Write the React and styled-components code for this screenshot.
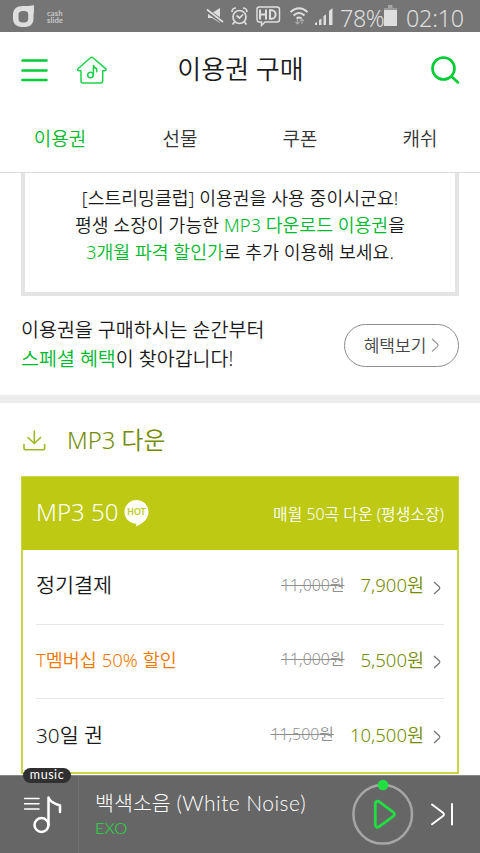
import React from "react";
import styled, { createGlobalStyle } from "styled-components";

const GlobalStyle = createGlobalStyle`
  * { box-sizing: border-box; }
  body {
    margin: 0;
    background: #fff;
    font-family: "Noto Sans", "Noto Sans CJK KR", sans-serif;
    font-weight: 350;
    color: #1a1a1a;
  }
`;

const Screen = styled.div`
  display: flex;
  flex-direction: column;
  width: 480px;
  height: 853px;
  overflow: hidden;
`;

const StatusBar = styled.header`
  display: flex;
  align-items: center;
  height: 32px;
  flex: none;
  padding: 0 0 0 12px;
  background: #757575;
  color: #dedede;
`;

const CashSlide = styled.div`
  flex: none;
  width: 158px;
  margin: 1px 0 0 11px;
  font: 700 7.6px/7px Lato, sans-serif;
  letter-spacing: 0.1px;
  color: #c9c9c9;
`;

const StatusIcons = styled.svg`
  display: block;
  flex: none;
`;

const StatusText = styled.span`
  flex: none;
  width: ${(p) => p.$width}px;
  margin-left: ${(p) => p.$gap}px;
  padding-top: 3px;
  font-size: 23.3px;
  font-weight: 350;
  line-height: 28px;
  white-space: nowrap;
  letter-spacing: ${(p) => p.$spacing}px;
`;

const TitleBar = styled.div`
  display: flex;
  align-items: center;
  flex: none;
  height: 75px;
  padding: 0 20px 0 21px;
`;

const PageTitle = styled.h1`
  flex: 1;
  margin: 0;
  padding: 0 56px 2px 0;
  text-align: center;
  font-size: 26px;
  font-weight: 350;
  line-height: 36px;
`;

const IconButton = styled.button`
  display: flex;
  padding: 0;
  margin: 0 ${(p) => p.$right || 0}px 0 0;
  border: 0;
  background: none;
`;

const Tabs = styled.nav`
  display: grid;
  grid-template-columns: repeat(4, 120px);
  flex: none;
  height: 66px;
  border-bottom: 1px solid #dcdcdc;
`;

const Tab = styled.a`
  padding-top: 17px;
  text-align: center;
  font-size: 19px;
  line-height: 30px;
  color: ${(p) => (p.$active ? "#00b92c" : "#333")};
`;

const Content = styled.main`
  flex: 1;
  min-height: 0;
  overflow: hidden;
`;

const Notice = styled.p`
  height: 123px;
  margin: 0 21px 0 21px;
  padding: 11px 0 0;
  border: 4px solid #e4e4e4;
  border-top: 0;
  text-align: center;
  font-size: 18.3px;
  line-height: 27px;
  white-space: nowrap;
`;

const Accent = styled.span`
  color: #00b92c;
`;

const Benefit = styled.section`
  display: flex;
  justify-content: space-between;
  height: 107px;
  padding: 19px 21px 0 21px;
  border-bottom: 8px solid #ececec;
  font-size: 19.5px;
  line-height: 29px;
`;

const BenefitButton = styled.button`
  display: flex;
  align-items: center;
  justify-content: center;
  gap: 5px;
  width: 115px;
  height: 43px;
  margin-top: 9px;
  padding: 0;
  border: 1px solid #8c8c8c;
  border-radius: 22px;
  background: #fff;
  font: 350 17px/24px "Noto Sans", "Noto Sans CJK KR", sans-serif;
  color: #444;
`;

const SectionTitle = styled.h2`
  display: flex;
  align-items: center;
  gap: 21px;
  height: 73px;
  margin: 0;
  padding: 0 23px 3px;
  font-size: 23.8px;
  font-weight: 350;
  color: #748c00;
`;

const SectionIcon = styled.svg`
  display: block;
  margin-top: 4px;
`;

const PlanCard = styled.section`
  height: 298px;
  margin: 0 21px 0 21px;
  border: 2px solid #cbd545;
  border-top-width: 1px;
`;

const PlanHeader = styled.div`
  display: flex;
  align-items: center;
  height: 73px;
  margin: 0 -1px;
  padding: 0 14px;
  background: #bdc913;
  color: #fff;
`;

const PlanName = styled.span`
  margin: -4px 6px 0 0;
  font-size: 24px;
  line-height: 34px;
`;

const HotBadge = styled.svg`
  display: block;
  margin-top: -2px;
`;

const PlanSummary = styled.span`
  margin: -1px 0 0 auto;
  font-size: 15.9px;
`;

const Option = styled.div`
  display: flex;
  align-items: center;
  height: ${(p) => (p.$last ? 73 : 74.5)}px;
  margin: 0 13px;
  padding-bottom: ${(p) => (p.$last ? 4 : 5)}px;
  border-bottom: ${(p) => (p.$last ? 0 : 1)}px solid #e6e6e6;
`;

const OptionName = styled.span`
  margin-right: auto;
  font-size: ${(p) => (p.$promo ? 18.5 : 20.7)}px;
  color: ${(p) => (p.$promo ? "#f07800" : "#1a1a1a")};
`;

const OldPrice = styled.s`
  margin-right: 16px;
  font-size: 15.9px;
  color: #909090;
`;

const Price = styled.span`
  margin-right: 9px;
  font-size: 18.5px;
  color: #748c00;
`;

const OptionArrow = styled.svg`
  display: block;
  margin: 7px 3px 0 0;
`;

const Player = styled.footer`
  position: relative;
  display: flex;
  flex: none;
  height: 78px;
  border-top: 1px solid #858985;
  background: #666;
  color: #fff;
`;

const MusicBadge = styled.span`
  position: absolute;
  left: 23px;
  top: -8px;
  width: 48px;
  height: 15px;
  border-radius: 8px;
  background: #303030;
  text-align: center;
  font: 400 12.5px/13px Lato, sans-serif;
  letter-spacing: 0.55px;
`;

const Playlist = styled.div`
  width: 79px;
  flex: none;
  padding: 19px 0 0 24px;
  border-right: 1px solid #707070;
`;

const Track = styled.div`
  flex: 1;
  padding: 11px 0 0 16px;
  white-space: nowrap;
`;

const TrackTitle = styled.div`
  font: 300 20.6px/32px Lato, "Noto Sans CJK KR", sans-serif;
`;

const LatinTitle = styled.span`
  font-size: 21px;
  letter-spacing: 0.45px;
`;

const Artist = styled.div`
  font: 300 16.5px/18px Lato, sans-serif;
  color: #20e040;
`;

const Controls = styled.svg`
  display: block;
  flex: none;
  margin-top: 2px;
`;

const OPTIONS = [
  { name: "정기결제", old: "11,000원", price: "7,900원" },
  { name: "T멤버십 50% 할인", old: "11,000원", price: "5,500원", promo: true },
  { name: "30일 권", old: "11,500원", price: "10,500원" },
];

export default function App() {
  return (
    <Screen>
      <GlobalStyle />
      <StatusBar>
        <StatusIcons width="24" height="32" viewBox="12 0 24 32">
          <path
            d="M34 5v6c0 1.500-.3 2.500-.5 4v3.500c0 6-3.500 8.500-10 8.500S13 24.500 13 18.500V15c0-6 3.500-9 10-9 4 0 8 .2 11-1zM23.500 11c-3.500 0-5 1.200-5 4.200v3.300c0 3 1.500 4 5 4s4.700-1.200 4.700-4v-3.700c0-2.800-1.200-3.800-4.700-3.800z"
            fill="#dedede"
            fillRule="evenodd"
          />
        </StatusIcons>
        <CashSlide>
          cash
          <br />
          slide
        </CashSlide>
        <StatusIcons width="130" height="32" viewBox="205 0 130 32" fill="none" stroke="#dedede">
          <path d="M208 13h4l8-5v15l-8-5h-4z" fill="#dedede" stroke="none" />
          <path d="M206 10l17 12" stroke="#757575" strokeWidth="4" />
          <path d="M207 9.500l16 12.500" strokeWidth="1.600" />
          <circle cx="239.500" cy="17" r="6.500" strokeWidth="1.700" />
          <path d="M236.500 15.500l3 2.500 3.500-3.500M232 12a4 4 0 0 1 4-4M243 8a4 4 0 0 1 4 4M234.500 22l-2 2.500M244.500 22l2 2.500" strokeWidth="1.700" />
          <path d="M259 7h18q2.500 0 2.500 2.500v10q0 2.500-2.500 2.500h-12l-3.500 3.500V22H259q-2-.5-2-2.500v-10Q257 7 259 7z" strokeWidth="1.500" />
          <path d="M260 9.500v10M266 9.500v10M260 14.500h6M270 10.300v8.400h1.500c5.500 0 5.500-8.400 0-8.400z" strokeWidth="2" />
          <path d="M290.500 12q8.500-7.500 17 0M293.500 15.500q5.500-5 11 0M296.500 18.500q2.500-2 5 0" strokeWidth="2" />
          <path d="M297.500 19v5m-2-2l2 2 2-2M302 24v-5m-2 2l2-2 2 2" stroke="#aaa" strokeWidth="1.200" />
          <path d="M315 25v-2l2-1v3zM319 25v-5l2.500-1.500V25zM323.500 25v-9l2.500-1.500V25zM329 25V11l3.500-3v17z" fill="#dedede" stroke="none" />
        </StatusIcons>
        <StatusText $width={43} $gap={5} $spacing={-0.4}>
          78%
        </StatusText>
        <StatusIcons width="15" height="32" viewBox="0 0 15 32">
          <path d="M5 5h4.500v3H5z" fill="#a5a5a5" />
          <path d="M1 8h13v18H1z" fill="#dedede" />
          <path d="M1 8h13v2H1z" fill="#999" />
        </StatusIcons>
        <StatusText $width={57} $gap={8} $spacing={-0.2}>
          02:10
        </StatusText>
      </StatusBar>

      <TitleBar>
        <IconButton $right={28} aria-label="menu">
          <svg width="27" height="26" viewBox="0 0 27 26" stroke="#00cc36" strokeWidth="2.600" strokeLinecap="round">
            <path d="M1.500 3.500h24M1.500 13.500h24M1.500 23h24" />
          </svg>
        </IconButton>
        <IconButton aria-label="home">
          <svg width="31" height="30" viewBox="76 54 31 30" fill="none" stroke="#1bd34b" strokeWidth="1.500" strokeLinejoin="round" strokeLinecap="round">
            <path d="M90.500 56.700q1.200-.8 2.400 0l13 11.200q.7 1.800-1.300 1.800h-1.900V80q0 2-2 2H83q-2 0-2-2V69.700h-2q-2-.3-1-1.900z" />
            <circle cx="90.500" cy="74" r="2.800" />
            <path d="M93.400 74v-9.500q.5 2.500 3.300 3v3.300" />
          </svg>
        </IconButton>
        <PageTitle>이용권 구매</PageTitle>
        <IconButton aria-label="search">
          <svg width="30" height="30" viewBox="430 54 30 30" fill="none" stroke="#00cc36" strokeWidth="2.600" strokeLinecap="round">
            <circle cx="443.500" cy="67.500" r="11" />
            <path d="M451.500 75.500l6.500 6" />
          </svg>
        </IconButton>
      </TitleBar>

      <Tabs>
        <Tab $active>이용권</Tab>
        <Tab>선물</Tab>
        <Tab>쿠폰</Tab>
        <Tab>캐쉬</Tab>
      </Tabs>

      <Content>
        <Notice>
          [스트리밍클럽] 이용권을 사용 중이시군요!
          <br />
          평생 소장이 가능한 <Accent>MP3 다운로드 이용권</Accent>을
          <br />
          <Accent>3개월 파격 할인가</Accent>로 추가 이용해 보세요.
        </Notice>
        <Benefit>
          <div>
            이용권을 구매하시는 순간부터
            <br />
            <Accent>스페셜 혜택</Accent>이 찾아갑니다!
          </div>
          <BenefitButton>
            혜택보기
            <svg width="8" height="15" viewBox="0 0 8 15" fill="none" stroke="#999" strokeWidth="1.200">
              <path d="M1 1l5.500 5q1 1.200 0 2.400L1 13.500" />
            </svg>
          </BenefitButton>
        </Benefit>
        <SectionTitle>
          <SectionIcon width="23" height="21" viewBox="0 0 23 21" fill="none" stroke="#9fb81f" strokeWidth="1.600" strokeLinecap="round">
            <path d="M11.300 1v12.500M5 7.500l6.300 6 6.300-6M1 14.500V18q0 1.800 1.800 1.800h17q1.800 0 1.800-1.800v-3.500" />
          </SectionIcon>
          MP3 다운
        </SectionTitle>
        <PlanCard>
          <PlanHeader>
            <PlanName>MP3 50</PlanName>
            <HotBadge width="25" height="28" viewBox="0 0 25 28">
              <path d="M12.500 1a12 11.800 0 0 1 12 12c0 6-4 10.500-12.500 14.500l.5-2.700A12 11.900 0 1 1 12.500 1z" fill="#fff" />
              <text x="12.500" y="16.300" textAnchor="middle" fontFamily="Lato, sans-serif" fontSize="8.500" fontWeight="700" fill="#bdc913">
                HOT
              </text>
            </HotBadge>
            <PlanSummary>매월 50곡 다운 (평생소장)</PlanSummary>
          </PlanHeader>
          {OPTIONS.map((o, i) => (
            <Option key={o.name} $last={i === OPTIONS.length - 1}>
              <OptionName $promo={o.promo}>{o.name}</OptionName>
              <OldPrice>{o.old}</OldPrice>
              <Price>{o.price}</Price>
              <OptionArrow width="8" height="14" viewBox="0 0 8 14" fill="none" stroke="#777" strokeWidth="1.300">
                <path d="M1 1l5.200 4.800q1 1.200 0 2.400L1 13" />
              </OptionArrow>
            </Option>
          ))}
        </PlanCard>
      </Content>

      <Player>
        <MusicBadge>music</MusicBadge>
        <Playlist>
          <svg width="38" height="40" viewBox="24 795 38 40" fill="none" stroke="#fff" strokeLinecap="round">
            <path d="M24.500 798.500h14.500M24.500 803.700h14.500M24.500 809h14.500" strokeWidth="1.500" />
            <circle cx="41.500" cy="825" r="7" strokeWidth="2.500" />
            <path d="M48.500 825v-27.500q1 4.500 11.500 8v6.500" strokeWidth="2.500" strokeLinejoin="round" />
          </svg>
        </Playlist>
        <Track>
          <TrackTitle>
            백색소음 <LatinTitle>(White Noise)</LatinTitle>
          </TrackTitle>
          <Artist>EXO</Artist>
        </Track>
        <Controls width="130" height="75" viewBox="350 778 130 75" fill="none">
          <circle cx="382.700" cy="814.300" r="29.300" stroke="#a6a6a6" strokeWidth="2.500" />
          <circle cx="383" cy="785" r="5.300" fill="#20e040" />
          <path d="M375.300 804.500c0-3.500 2-4.300 4.500-2.300l13 9.700c2.200 1.700 2.200 3.300 0 4.800l-13 9.500c-2.500 1.800-4.500 1.300-4.500-2z" stroke="#20e040" strokeWidth="2.800" />
          <path d="M432 804.500l11 8.300q1.800 1.600 0 3.200l-11 8.200M452 804v20.500" stroke="#fff" strokeWidth="2" strokeLinecap="round" />
        </Controls>
      </Player>
    </Screen>
  );
}
